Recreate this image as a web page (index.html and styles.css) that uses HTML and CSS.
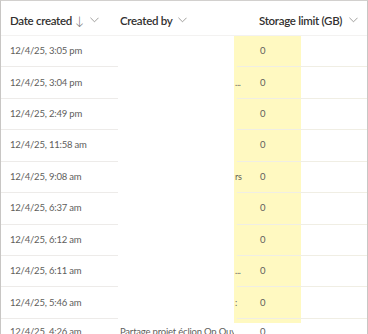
FILE: index.html
```html
<!DOCTYPE html>
<html>
<head>
<meta charset="utf-8">
<link rel="stylesheet" href="styles.css">
</head>
<body>
<div class="frame">
  <div class="header">
    <div class="hcell c1">Date created <span class="arrow">↓</span><svg class="chev" viewBox="0 0 10 6"><path d="M0.5 0.5 L5 5 L9.5 0.5" /></svg></div>
    <div class="hcell c2">Created by<svg class="chev" viewBox="0 0 10 6"><path d="M0.5 0.5 L5 5 L9.5 0.5" /></svg></div>
    <div class="hcell c3">Storage limit (GB)<svg class="chev" viewBox="0 0 10 6"><path d="M0.5 0.5 L5 5 L9.5 0.5" /></svg></div>
  </div>
  <div class="body">
    <div class="ycol"></div>
    <div class="row"><div class="date">12/4/25, 3:05 pm</div><div class="by"></div><div class="frag"></div><div class="val">0</div></div>
    <div class="row"><div class="date">12/4/25, 3:04 pm</div><div class="by"></div><div class="frag">...</div><div class="val">0</div></div>
    <div class="row"><div class="date">12/4/25, 2:49 pm</div><div class="by"></div><div class="frag"></div><div class="val">0</div></div>
    <div class="row"><div class="date">12/4/25, 11:58 am</div><div class="by"></div><div class="frag"></div><div class="val">0</div></div>
    <div class="row"><div class="date">12/4/25, 9:08 am</div><div class="by"></div><div class="frag">rs</div><div class="val">0</div></div>
    <div class="row"><div class="date">12/4/25, 6:37 am</div><div class="by"></div><div class="frag"></div><div class="val">0</div></div>
    <div class="row"><div class="date">12/4/25, 6:12 am</div><div class="by"></div><div class="frag"></div><div class="val">0</div></div>
    <div class="row"><div class="date">12/4/25, 6:11 am</div><div class="by"></div><div class="frag">...</div><div class="val">0</div></div>
    <div class="row"><div class="date">12/4/25, 5:46 am</div><div class="by"></div><div class="frag">:</div><div class="val">0</div></div>
    <div class="row last"><div class="date">12/4/25, 4:26 am</div><div class="by full">Partage projet éclion Op Ouv...</div><div class="frag"></div><div class="val">0</div></div>
  </div>
</div>
</body>
</html>
```
FILE: styles.css
```css
html, body {
  margin: 0;
  padding: 0;
  background: #ffffff;
  overflow: hidden;
}
body {
  font-family: Lato, "Open Sans", sans-serif;
  color: #323130;
}
.frame {
  width: 366px;
  height: 340px;
  border-left: 1px solid #c8c6c4;
  border-top: 1px solid #d2d0ce;
  border-right: 1px solid #c8c6c4;
  box-sizing: content-box;
  overflow: hidden;
}
.header {
  display: grid;
  grid-template-columns: 117px 116px 133px;
  height: 34px;
  border-bottom: 1px solid #f3f2f1;
  align-items: center;
}
.hcell {
  display: flex;
  align-items: center;
  font-size: 11.5px;
  font-weight: 600;
  letter-spacing: -0.3px;
  color: #323130;
  white-space: nowrap;
  padding-top: 4px;
}
.c1 { padding-left: 9px; }
.c2 { padding-left: 2px; }
.c3 { padding-left: 25px; }
.arrow {
  font-weight: 300;
  color: #605e5c;
  font-size: 12px;
  margin-left: 3px;
}
.chev {
  width: 9px;
  height: 6px;
  margin-left: 6px;
  fill: none;
  stroke: #8a8886;
  stroke-width: 0.9;
}
.c1 .chev { margin-left: 6px; }
.c3 .chev { margin-left: 7px; }
.body {
  position: relative;
}
.ycol {
  position: absolute;
  left: 233px;
  top: 0;
  width: 67px;
  height: 287px;
  background: #fff9c1;
}
.row {
  position: relative;
  display: grid;
  grid-template-columns: 117px 116px 3px 130px;
  height: 31.43px;
  align-items: center;
  font-size: 9.5px;
  letter-spacing: -0.2px;
  color: #605e5c;
}
.row::before {
  content: "";
  position: absolute;
  left: 0;
  width: 117px;
  bottom: 0;
  border-bottom: 1px solid #edebe9;
}
.row::after {
  content: "";
  position: absolute;
  left: 236px;
  right: 0;
  bottom: 0;
  border-bottom: 1px solid #f0eee4;
}
.row.last::before, .row.last::after { display: none; }
.row.last { align-items: start; padding-top: 8px; box-sizing: border-box; }
.date {
  padding-left: 9px;
  white-space: nowrap;
  position: relative;
  top: -1px;
}
.by {
  white-space: nowrap;
  overflow: hidden;
  padding-left: 2px;
  position: relative;
  top: -1px;
}
.frag {
  position: relative;
  z-index: 1;
  font-size: 9px;
  white-space: nowrap;
  overflow: visible;
  margin-left: 1px;
  top: -1px;
}
.val {
  position: relative;
  z-index: 1;
  padding-left: 23px;
  top: -1px;
}
```
